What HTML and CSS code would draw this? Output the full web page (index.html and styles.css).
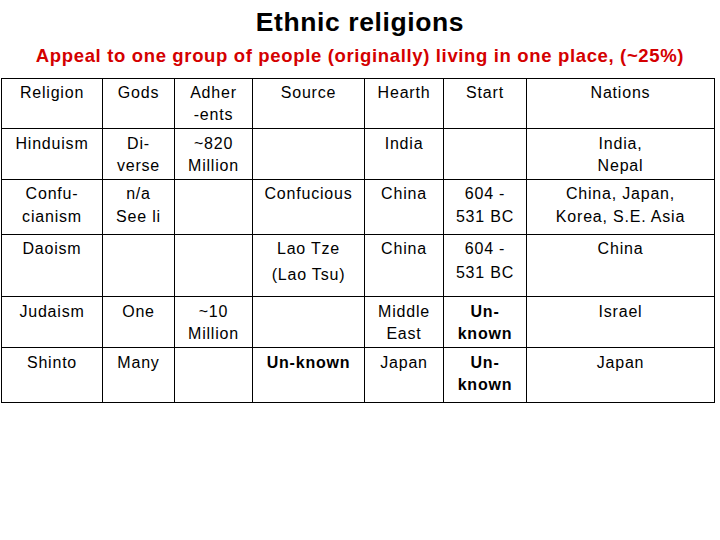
FILE: index.html
```html
<!DOCTYPE html>
<html lang="en">
<head>
<meta charset="utf-8">
<title>Ethnic religions</title>
<link rel="stylesheet" href="styles.css">
</head>
<body>
<main class="slide">
  <h1 class="title">Ethnic religions</h1>
  <p class="subtitle">Appeal to one group of people (originally) living in one place, (~25%)</p>
  <div class="table-wrap">
    <table class="grid">
      <colgroup>
        <col class="c-religion">
        <col class="c-gods">
        <col class="c-adher">
        <col class="c-source">
        <col class="c-hearth">
        <col class="c-start">
        <col class="c-nations">
      </colgroup>
      <tbody>
        <tr class="r-head">
          <td>Religion</td>
          <td>Gods</td>
          <td>Adher<br>-ents</td>
          <td>Source</td>
          <td>Hearth</td>
          <td>Start</td>
          <td>Nations</td>
        </tr>
        <tr class="r-hindu">
          <td>Hinduism</td>
          <td>Di-<br>verse</td>
          <td>~820<br>Million</td>
          <td></td>
          <td>India</td>
          <td></td>
          <td>India,<br>Nepal</td>
        </tr>
        <tr class="r-conf">
          <td>Confu-<br>cianism</td>
          <td>n/a<br>See li</td>
          <td></td>
          <td>Confucious</td>
          <td>China</td>
          <td>604 -<br>531 BC</td>
          <td>China, Japan,<br>Korea, S.E. Asia</td>
        </tr>
        <tr class="r-dao">
          <td>Daoism</td>
          <td></td>
          <td></td>
          <td class="tall">Lao Tze<br>(Lao Tsu)</td>
          <td>China</td>
          <td>604 -<br>531 BC</td>
          <td>China</td>
        </tr>
        <tr class="r-jud">
          <td>Judaism</td>
          <td>One</td>
          <td>~10<br>Million</td>
          <td></td>
          <td>Middle<br>East</td>
          <td class="strong">Un-<br>known</td>
          <td>Israel</td>
        </tr>
        <tr class="r-shinto">
          <td>Shinto</td>
          <td>Many</td>
          <td></td>
          <td class="strong">Un-known</td>
          <td>Japan</td>
          <td class="strong">Un-<br>known</td>
          <td>Japan</td>
        </tr>
      </tbody>
    </table>
  </div>
</main>
</body>
</html>
```

FILE: styles.css
```css
html, body {
  margin: 0;
  padding: 0;
  background: #ffffff;
}

body {
  font-family: "Liberation Sans", Arial, Helvetica, sans-serif;
  color: #000000;
}

.slide {
  width: 720px;
  height: 540px;
  overflow: hidden;
}

.title {
  margin: 7px 0 0;
  font-size: 26.5px;
  line-height: 30px;
  font-weight: bold;
  text-align: center;
  letter-spacing: 0.6px;
}

.subtitle {
  margin: 8px 0 0;
  font-size: 18.5px;
  line-height: 22px;
  font-weight: bold;
  color: #d40000;
  text-align: center;
  letter-spacing: 0.65px;
}

.table-wrap {
  margin-top: 11px;
  padding-left: 1px;
}

.grid {
  border-collapse: collapse;
  table-layout: fixed;
  width: 714px;
}

.c-religion { width: 101px; }
.c-gods { width: 72px; }
.c-adher { width: 78px; }
.c-source { width: 112px; }
.c-hearth { width: 79px; }
.c-start { width: 83px; }
.c-nations { width: 188px; }

.grid td {
  border: 1px solid #000000;
  padding: 3px 0 0;
  vertical-align: top;
  text-align: center;
  font-size: 16px;
  line-height: 22px;
  letter-spacing: 0.8px;
  white-space: nowrap;
}

.r-head { height: 50px; }
.r-hindu { height: 51px; }
.r-hindu td { padding-top: 4px; }
.r-conf { height: 55px; }
.r-conf td { line-height: 23px; padding-top: 2px; }
.r-dao { height: 62px; }
.r-dao td { line-height: 24px; padding-top: 2px; }
.r-dao td.tall { line-height: 26px; padding-top: 1px; }
.r-jud { height: 51px; }
.r-jud td { padding-top: 4px; }
.r-shinto { height: 55px; }
.r-shinto td { padding-top: 4px; }

.grid td.strong {
  font-weight: bold;
}
```
